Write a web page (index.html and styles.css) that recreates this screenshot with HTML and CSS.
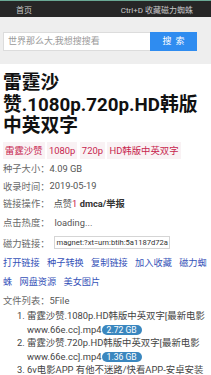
FILE: index.html
```html
<!DOCTYPE html>
<html lang="zh-CN">
<head>
<meta charset="utf-8">
<title>雷霆沙赞</title>
<link rel="stylesheet" href="styles.css">
</head>
<body>
<div class="topbar">
  <span class="home">首页</span>
  <span class="fav">Ctrl+D 收藏磁力蜘蛛</span>
</div>
<div class="search">
  <div class="search-form">
    <div class="search-input">世界那么大,我想搜搜看</div>
    <div class="search-btn">搜 索</div>
  </div>
</div>
<div class="content">
  <h1 class="title">雷霆沙赞.1080p.720p.HD韩版中英双字</h1>
  <div class="tags"><span class="tag">雷霆沙赞</span><span class="tag">1080p</span><span class="tag">720p</span><span class="tag">HD韩版中英双字</span></div>
  <div class="row"><span class="label">种子大小：</span><span class="val">4.09 GB</span></div>
  <div class="row"><span class="label">收录时间：</span><span class="val">2019-05-19</span></div>
  <div class="row"><span class="label">链接操作：</span><span class="val ops">点赞<span class="red">1</span> <b>dmca/举报</b></span></div>
  <div class="row tall"><span class="label">点击热度：</span><span class="val loading">loading...</span></div>
  <div class="row tall"><span class="label">磁力链接：</span><span class="magnet">magnet:?xt=urn:btih:5a1187d72a</span></div>
  <div class="links"><a class="lnk">打开链接</a> <a class="lnk">种子转换</a> <a class="lnk">复制链接</a> <a class="lnk">加入收藏</a> <a class="lnk">磁力蜘蛛</a> <a class="lnk">网盘资源</a> <a class="lnk">美女图片</a></div>
  <div class="row files"><span class="label">文件列表：</span><span class="val">5File</span></div>
  <ol class="filelist">
    <li>雷霆沙赞.1080p.HD韩版中英双字[最新电影www.66e.cc].mp4<span class="size">2.72 GB</span></li>
    <li>雷霆沙赞.720p.HD韩版中英双字[最新电影www.66e.cc].mp4<span class="size">1.36 GB</span></li>
    <li>6v电影APP 有他不迷路/快看APP-安卓安装</li>
  </ol>
</div>
</body>
</html>
```

FILE: styles.css
```css
* { box-sizing: border-box; }
html, body { margin: 0; padding: 0; }
body {
  width: 211px;
  background: #fff;
  font-family: "Roboto", "Noto Sans CJK SC", sans-serif;
  color: #555;
  overflow: hidden;
}
.topbar {
  height: 17px;
  background: #262626;
  border-top: 1px solid #6aa894;
  display: flex;
  align-items: center;
  justify-content: space-between;
  padding: 0 18px 0 16px;
  font-size: 8px;
  color: #c8c8c8;
}
.search {
  background: #eeeeee;
  padding: 15px 14px 13px 3px;
}
.search-form {
  display: flex;
  height: 19px;
}
.search-input {
  flex: 1;
  background: #fff;
  border: 1px solid #dcdcdc;
  border-right: none;
  font-size: 9px;
  color: #9a9a9a;
  line-height: 17px;
  padding-left: 4px;
}
.search-btn {
  width: 47px;
  background: #2f8cf0;
  color: #fff;
  font-size: 9px;
  line-height: 19px;
  text-align: center;
  word-spacing: 2px;
}
.content {
  padding: 0 3px;
}
.title {
  margin: 9px 0 0;
  font-size: 18.75px;
  line-height: 21.5px;
  font-weight: bold;
  color: #111;
}
.tags {
  display: flex;
  gap: 2.5px;
  margin-top: 4px;
  margin-bottom: 1px;
}
.tag {
  font-size: 9.4px;
  line-height: 17px;
  padding: 0 2px;
  color: #c7254e;
  background: #f9f2f4;
}
.row {
  height: 17.5px;
  display: flex;
  align-items: center;
  font-size: 9.3px;
}
.row.tall { height: 20.5px; }
.label { color: #6a6a6a; }
.val { color: #555; }
.ops { margin-left: 4px; }
.loading { margin-left: 5px; }
.red { color: #c7254e; }
.ops b { color: #333; }
.magnet {
  margin-left: 4px;
  width: 116px;
  height: 13px;
  border: 1px solid #d5d5d5;
  font-size: 7.6px;
  line-height: 11px;
  padding-left: 2px;
  color: #333;
  white-space: nowrap;
  overflow: hidden;
}
.links {
  font-size: 9.2px;
  line-height: 18.5px;
  color: #3552b8;
  padding-top: 1px;
}
.lnk { margin-right: 5px; }
.row.files { height: 18px; }
.filelist {
  margin: 0;
  padding-left: 24px;
  font-size: 9.4px;
  line-height: 13.6px;
  color: #444;
}
.size {
  display: inline-block;
  background: #3a87bf;
  color: #fff;
  font-size: 8.6px;
  line-height: 10px;
  padding: 0 5px;
  border-radius: 5px;
}
```
